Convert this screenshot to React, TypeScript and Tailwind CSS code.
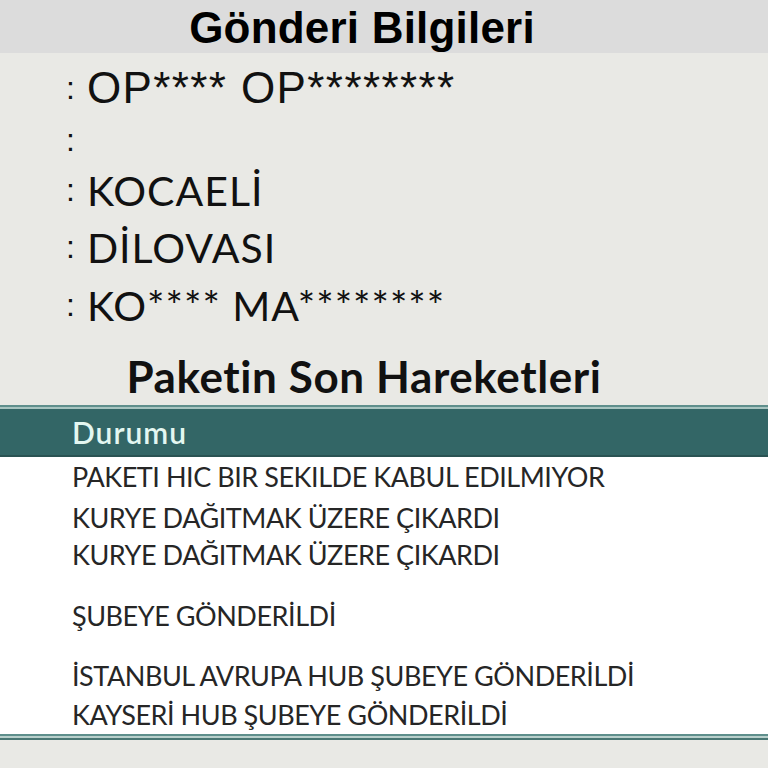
const info = [
  { value: 'OP**** OP********', helv: true, h: 'h-[54px]' },
  { value: '', helv: false, h: 'h-[50px]' },
  { value: 'KOCAELİ', helv: false, h: 'h-[50px]' },
  { value: 'DİLOVASI', helv: false, h: 'h-[64px]' },
  { value: 'KO**** MA********', helv: false, h: 'h-[52px]' },
];

const moves = [
  { text: 'PAKETI HIC BIR SEKILDE KABUL EDILMIYOR', h: 'h-[42px]' },
  { text: 'KURYE DAĞITMAK ÜZERE ÇIKARDI', h: 'h-[41px]' },
  { text: 'KURYE DAĞITMAK ÜZERE ÇIKARDI', h: 'h-[37px]' },
  { text: 'ŞUBEYE GÖNDERİLDİ', h: 'h-[61px]' },
  { text: 'İSTANBUL AVRUPA HUB ŞUBEYE GÖNDERİLDİ', h: 'h-[60px]' },
  { text: 'KAYSERİ HUB ŞUBEYE GÖNDERİLDİ', h: 'h-[39px]' },
];

export default function App() {
  return (
    <div className="w-full h-[768px] bg-[#e9e9e5] overflow-hidden">
      <div className="h-[53px] bg-[#dcdcdc] flex items-center justify-center pr-[44px]">
        <h1 className="text-[44px] leading-none font-bold text-black tracking-[0.2px] font-['Liberation_Sans',Arial,sans-serif] pt-[2px]">
          Gönderi Bilgileri
        </h1>
      </div>

      <div className="pt-[8px] pl-[66px]">
        {info.map((row, i) => (
          <div key={i} className={`${row.h} flex items-center text-[#111]`}>
            <span className="text-[32px] font-['Liberation_Sans',Arial,sans-serif] mr-[12px]">:</span>
            <span
              className={
                row.helv
                  ? "text-[44px] leading-none font-['Liberation_Sans',Arial,sans-serif] tracking-[1.4px]"
                  : "text-[41px] leading-none font-['Lato',sans-serif] tracking-[1px]"
              }
            >
              {row.value}
            </span>
          </div>
        ))}
      </div>

      <div className="h-[74px] flex items-center justify-center pt-[16px] pr-[40px]">
        <h2 className="text-[44px] leading-none font-bold text-[#111] font-['Lato',sans-serif] tracking-[0.6px]">
          Paketin Son Hareketleri
        </h2>
      </div>

      <div className="h-[2px] bg-[#5f8f8c]" />
      <div className="h-[2px] bg-[#a7c4c0]" />
      <div className="h-[46px] bg-[#336666] flex items-center pl-[72px]">
        <span className="text-[30px] leading-none font-semibold text-[#e3f7f1] font-['Lato',sans-serif] tracking-[1px]">
          Durumu
        </span>
      </div>
      <div className="h-[2px] bg-[#2a5353]" />

      <div className="bg-white h-[277px] pl-[72px] pt-[2px]">
        {moves.map((m, i) => (
          <div key={i} className={`${m.h} flex items-end pb-[4px]`}>
            <span className="text-[27px] text-[#262626] font-['Lato',sans-serif] tracking-[-0.45px]">{m.text}</span>
          </div>
        ))}
      </div>

      <div className="h-[2px] bg-[#5f8f8c]" />
      <div className="h-[2px] bg-[#b9d0cc]" />
      <div className="h-[2px] bg-[#4a7774]" />
    </div>
  );
}
